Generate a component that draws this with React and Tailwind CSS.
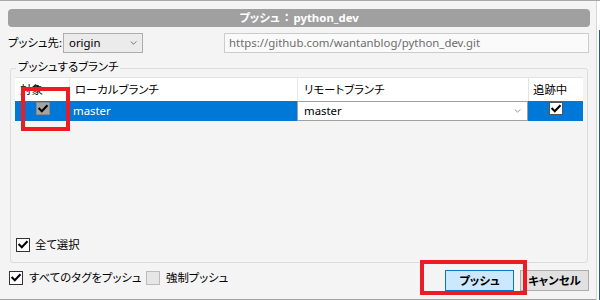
import React from 'react';

const Check = ({ className }) => (
  <svg viewBox="0 0 13 13" className={className}>
    <path d="M2.5 6.2 L5.2 9 L10.6 3.2" fill="none" stroke="currentColor" strokeWidth="2.2" strokeLinecap="square" />
  </svg>
);

const Chevron = ({ className }) => (
  <svg viewBox="0 0 8 5" className={className}>
    <path d="M0.5 0.5 L4 4 L7.5 0.5" fill="none" stroke="currentColor" strokeWidth="1" />
  </svg>
);

const CheckBox = ({ checked = true, disabled = false }) => (
  <span
    className={`w-[14px] h-[14px] border flex items-center justify-center shrink-0 ${
      disabled ? 'border-[#bcbcbc] bg-[#e6e6e6]' : 'border-[#333333] bg-white text-black'
    }`}
  >
    {checked && !disabled && <Check className="w-[12px] h-[12px]" />}
  </span>
);

const App = () => {
  return (
    <div className="w-[600px] h-[300px] bg-[#f4f4f4] flex overflow-hidden relative whitespace-nowrap text-[11.4px] leading-none text-black font-['Noto_Sans','Noto_Sans_CJK_JP',sans-serif] [font-feature-settings:'palt'] border-t border-[#a9a9a9]">
      {/* Dialog body */}
      <div className="w-[596px] flex flex-col border-b border-[#a0a0a0]">
        {/* Title bar */}
        <div className="mt-[8px] ml-[8px] w-[582px] h-[18px] rounded-[4px] bg-[#a0a0a0] flex items-center justify-center text-white font-bold">
          プッシュ<span className="mx-[4px]">：</span>python_dev
        </div>

        {/* Remote row */}
        <div className="mt-[6px] h-[20px] flex items-center">
          <span className="ml-[8px] w-[55px]">プッシュ先:</span>
          <div className="w-[80px] h-[20px] border border-[#adadad] bg-[#ebebeb] flex items-center justify-between pl-[5px] pr-[5px]">
            <span>origin</span>
            <Chevron className="w-[7px] h-[4px] text-[#555555]" />
          </div>
          <div className="ml-[81px] w-[365px] h-[20px] border border-[#cccccc] bg-[#fafafa] flex items-center pl-[4px] text-[#6d6d6d]">
            https://github.com/wantanblog/python_dev.git
          </div>
        </div>

        {/* Branch group */}
        <div className="mt-[15px] ml-[10px] w-[578px] h-[195px] border border-[#dcdcdc] rounded-[3px] relative flex flex-col pt-[8px] px-[4px] pb-[10px]">
          <span className="absolute -top-[8px] left-[5px] px-[2px] bg-[#f4f4f4]">プッシュするブランチ</span>

          {/* Grid */}
          <div className="w-[568px] flex flex-col">
            <div className="h-[24px] flex bg-white border-t border-[#e3e3e3]">
              <div className="w-[54px] flex items-center pl-[5px]">対象</div>
              <div className="w-[228px] flex items-center pl-[5px] border-l border-[#e8e8e8]">ローカルブランチ</div>
              <div className="w-[231px] flex items-center pl-[6px] border-l border-[#e8e8e8]">リモートブランチ</div>
              <div className="flex-1 flex items-center pl-[4px] border-l border-[#e3e3e3]">追跡中</div>
            </div>
            <div className="h-[20px] flex">
              <div className="w-[54px] bg-[#0078d7] flex justify-center pt-[1px] pl-[2px]">
                <span className="w-[14px] h-[13px] bg-[#a4a4a4] border border-[#8a8a8a] flex items-center justify-center text-black">
                  <Check className="w-[12px] h-[12px]" />
                </span>
              </div>
              <div className="w-[228px] bg-[#0078d7] text-white flex items-center pl-[4px]">master</div>
              <div className="w-[231px] bg-white border border-[#a0a0a0] flex items-center justify-between pl-[6px] pr-[6px]">
                <span>master</span>
                <Chevron className="w-[7px] h-[4px] text-[#777777]" />
              </div>
              <div className="flex-1 bg-[#0078d7] flex justify-center pt-[1px]">
                <span className="w-[14px] h-[13px] bg-white border border-[#555555] flex items-center justify-center text-black">
                  <Check className="w-[12px] h-[12px]" />
                </span>
              </div>
            </div>
          </div>

          <div className="flex-1" />

          <div className="h-[14px] flex items-center gap-[5px] pl-[1px]">
            <CheckBox />
            <span>全て選択</span>
          </div>
        </div>

        {/* Bottom row */}
        <div className="mt-[7px] h-[21px] flex items-start">
          <div className="ml-[9px] mt-[1px] w-[130px] flex items-center gap-[6px]">
            <CheckBox />
            <span>すべてのタグをプッシュ</span>
          </div>
          <div className="ml-[7px] mt-[1px] flex items-center gap-[6px]">
            <CheckBox disabled />
            <span>強制プッシュ</span>
          </div>
          <div className="ml-auto mr-[7px] flex gap-[6px]">
            <button className="w-[69px] h-[21px] bg-[#cce8ff] border border-[#0078d7] flex items-center justify-center font-bold">
              プッシュ
            </button>
            <button className="w-[69px] h-[21px] bg-[#e1e1e1] border border-[#adadad] flex items-center justify-center font-bold">
              キャンセル
            </button>
          </div>
        </div>
      </div>

      {/* Right window edge */}
      <div className="w-[1px] bg-[#d6d6d6]" />
      <div className="w-[2px] bg-white" />
      <div className="w-[1px] flex flex-col">
        <div className="h-[29px] bg-white" />
        <div className="flex-1 bg-[#1f5c99]" />
      </div>

      {/* Red annotation boxes */}
      <div className="absolute left-[21px] top-[86px] w-[49px] h-[44px] border-[4px] border-[#ec1c24]" />
      <div className="absolute left-[420px] top-[259px] w-[107px] h-[35px] border-[4px] border-[#ec1c24]" />
    </div>
  );
};

export default App;
